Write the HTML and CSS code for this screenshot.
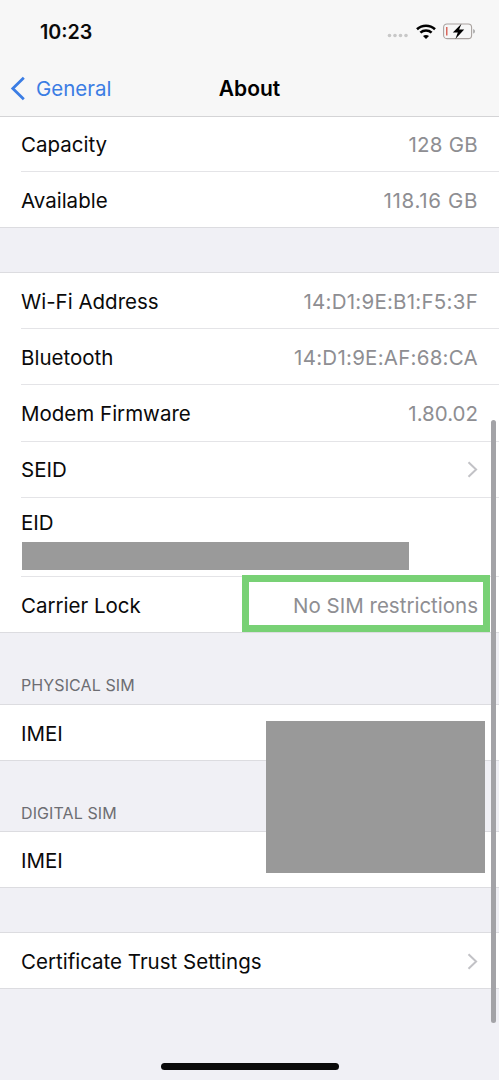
FILE: index.html
```html
<!DOCTYPE html>
<html lang="en">
<head>
<meta charset="utf-8">
<title>About</title>
<link rel="stylesheet" href="styles.css">
</head>
<body>
<div class="screen">
  <header class="top">
    <div class="status">
      <span class="time">10:23</span>
      <div class="status-icons">
        <svg class="dots" width="22" height="5" viewBox="0 0 22 5"><circle cx="2.5" cy="2.5" r="1.8"/><circle cx="8" cy="2.5" r="1.8"/><circle cx="13.5" cy="2.5" r="1.8"/><circle cx="19" cy="2.5" r="1.8"/></svg>
        <svg class="wifi" width="20" height="15" viewBox="0 0 20 15"><path d="M1 5.2C6 .6 14 .6 19 5.2" fill="none" stroke="#000" stroke-width="2.6"/><path d="M4.4 8.6C7.5 5.8 12.5 5.8 15.6 8.6" fill="none" stroke="#000" stroke-width="2.6"/><path d="M7 12c1.7-1.5 4.3-1.5 6 0l-3 3z"/></svg>
        <svg class="battery" width="32" height="17" viewBox="0 0 32 17"><rect x=".6" y="1" width="28" height="14.6" rx="3.4" fill="none" stroke="#a9a29f" stroke-width="1.1"/><rect x="3" y="4" width="1.5" height="8.5" fill="#d9675c"/><path d="M30.4 6v4.6c.9-.4 1.3-1.3 1.3-2.3s-.4-1.9-1.3-2.3z" fill="#8e8e8e"/><path d="M18.5 .8L9.8 9.6h5L12.4 16l8.8-9.4h-5.1z"/></svg>
      </div>
    </div>
    <nav class="nav">
      <div class="back">
        <svg width="16" height="25" viewBox="0 0 16 25"><path d="M13.8 1.8L2.8 12.5l11 10.7" fill="none" stroke="#3b7de4" stroke-width="2.8"/></svg>
        <span>General</span>
      </div>
      <h1 class="title">About</h1>
    </nav>
  </header>

  <section class="group">
    <div class="row"><span>Capacity</span><span class="value value-hex">128 GB</span></div>
    <div class="row"><span>Available</span><span class="value value-wide">118.16 GB</span></div>
  </section>

  <section class="group spaced">
    <div class="row"><span>Wi-Fi Address</span><span class="value value-hex">14:D1:9E:B1:F5:3F</span></div>
    <div class="row"><span>Bluetooth</span><span class="value value-hex">14:D1:9E:AF:68:CA</span></div>
    <div class="row"><span>Modem Firmware</span><span class="value">1.80.02</span></div>
    <div class="row"><span>SEID</span><svg class="chev" width="11" height="17" viewBox="0 0 11 17"><path d="M1.5 1.2l7.6 7.3-7.6 7.3" fill="none" stroke="#c2c2c6" stroke-width="2"/></svg></div>
    <div class="row row-eid"><span>EID</span><div class="redact"></div></div>
    <div class="row"><span>Carrier Lock</span><span class="value">No SIM restrictions</span></div>
  </section>

  <h2 class="caption caption-first">PHYSICAL SIM</h2>
  <section class="group">
    <div class="row"><span>IMEI</span></div>
  </section>

  <h2 class="caption">DIGITAL SIM</h2>
  <section class="group">
    <div class="row"><span>IMEI</span></div>
  </section>

  <section class="group spaced">
    <div class="row"><span>Certificate Trust Settings</span><svg class="chev" width="11" height="17" viewBox="0 0 11 17"><path d="M1.5 1.2l7.6 7.3-7.6 7.3" fill="none" stroke="#c2c2c6" stroke-width="2"/></svg></div>
  </section>

  <div class="highlight"></div>
  <div class="mask"></div>
  <div class="scrollbar"></div>
  <div class="home"></div>
</div>
</body>
</html>
```

FILE: styles.css
```css
* { box-sizing: border-box; }
html, body { margin: 0; padding: 0; }
body { background: #f0f0f5; font-family: Inter, "Liberation Sans", sans-serif; color: #0a0a0a; }
.screen { position: relative; width: 499px; height: 1080px; overflow: hidden; background: #f0f0f5; }
.top { height: 117px; background: #f7f7f7; border-bottom: 1px solid #d4d4d6; }
.status { height: 60px; display: flex; justify-content: space-between; align-items: center; padding: 3px 24px 0 40px; }
.time { font-size: 19.7px; font-weight: 600; }
.status-icons { display: flex; align-items: center; gap: 7px; }
.dots { fill: #c8c8c8; margin-top: 7px; }
.nav { position: relative; height: 56px; display: flex; align-items: center; justify-content: center; }
.back { position: absolute; left: 10px; top: 16px; display: flex; align-items: center; gap: 10px; color: #3b7de4; font-size: 20.5px; }
.title { margin: 0; font-size: 21px; font-weight: 600; color: #000; }
.group { background: #fff; border-bottom: 1px solid #dcdce0; }
.spaced { margin-top: 44px; border-top: 1px solid #dcdce0; }
.row { height: 56.2px; margin-left: 21px; padding: 1px 21px 0 0; display: flex; justify-content: space-between; align-items: center; font-size: 20.5px; border-bottom: 1px solid #e4e4e7; }
.group:first-of-type .row:first-child { height: 55px; }
.row:last-child { border-bottom: 0; height: 55px; padding-top: 2px; }
.value { color: #8e8e92; }
.value-hex { letter-spacing: 0.25px; }
.value-wide { letter-spacing: 0.65px; }
.row-eid { height: 79px; flex-direction: column; align-items: flex-start; justify-content: flex-start; padding-top: 12px; }
.redact { width: 387px; height: 28px; margin: 7px 0 0 1px; background: #9a9a9a; }
.caption { margin: 0; height: 71px; padding: 43px 0 0 21px; font-size: 16px; font-weight: 400; letter-spacing: 0.1px; line-height: 19px; color: #6d6d72; border-bottom: 1px solid #dcdce0; }
.caption-first { height: 72px; }
.highlight { position: absolute; left: 242px; top: 575px; width: 248px; height: 57px; border: 7px solid #78d175; }
.mask { position: absolute; left: 266px; top: 721px; width: 219px; height: 152px; background: #999; }
.scrollbar { position: absolute; left: 491px; top: 420px; width: 5px; height: 603px; border-radius: 3px; background: #a3a3a7; }
.home { position: absolute; left: 161px; top: 1063px; width: 178px; height: 7px; border-radius: 4px; background: #0a0a0a; }
```
